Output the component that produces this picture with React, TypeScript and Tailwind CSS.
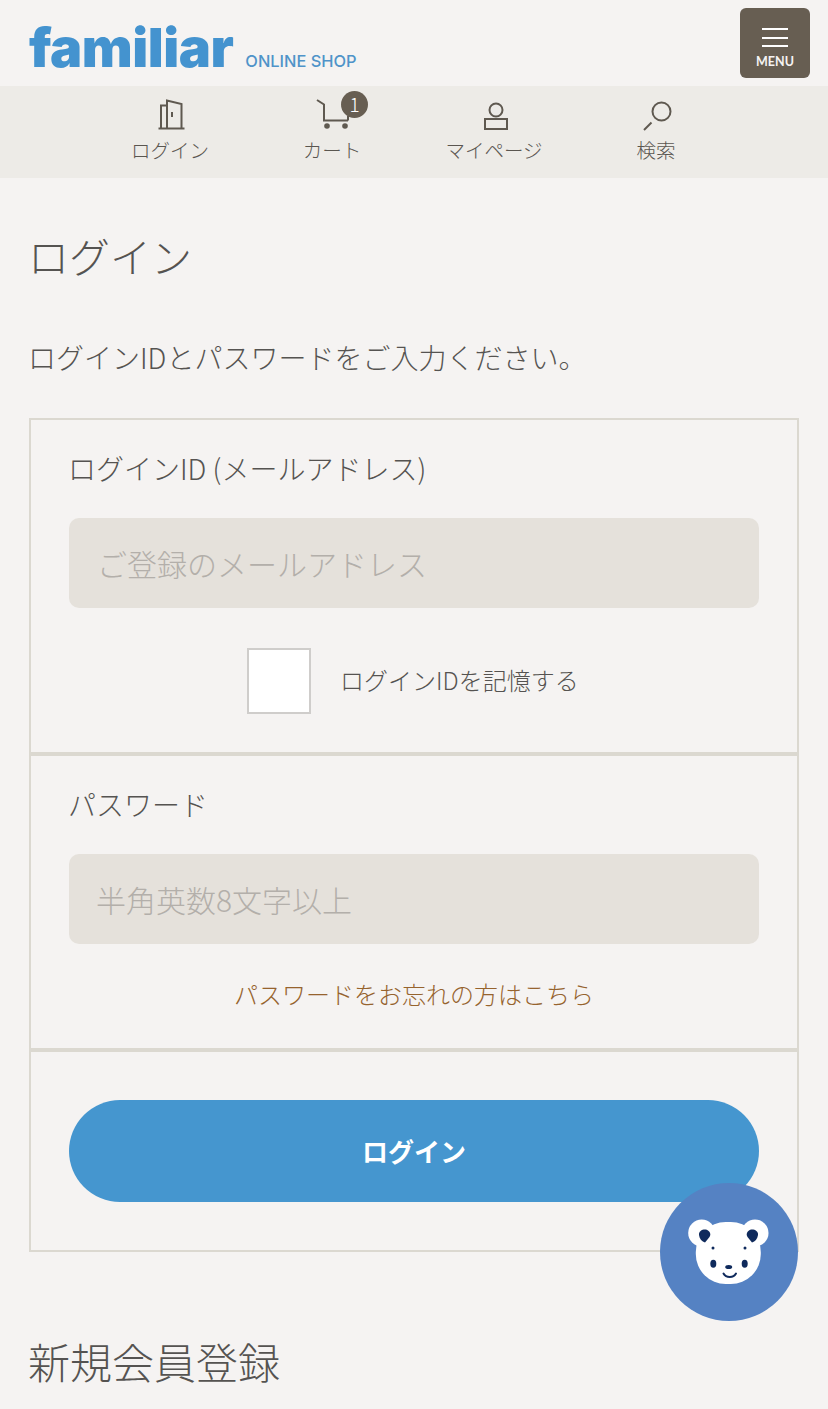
const jp = { fontFamily: '"Noto Sans CJK JP", sans-serif' };

function DoorIcon() {
  return (
    <svg width="28" height="32" viewBox="0 0 28 32" fill="none" stroke="#5f5950" strokeWidth="2">
      <path d="M0.5 29.5H26.5" />
      <path d="M3 29V6.5H9" />
      <path d="M9 29V1.5L23.5 5V29" />
      <path d="M14 13V18" />
    </svg>
  );
}
function CartIcon() {
  return (
    <svg width="36" height="32" viewBox="0 0 36 32" fill="none" stroke="#5f5950" strokeWidth="2">
      <path d="M1 1L8 5.5V21.5H32" />
      <path d="M32 21.5V17" />
      <circle cx="11" cy="27" r="2.8" fill="#5f5950" stroke="none" />
      <circle cx="29" cy="27" r="2.8" fill="#5f5950" stroke="none" />
    </svg>
  );
}
function UserIcon() {
  return (
    <svg width="26" height="30" viewBox="0 0 26 30" fill="none" stroke="#5f5950" strokeWidth="2">
      <circle cx="13" cy="9" r="6.5" />
      <rect x="2" y="18" width="22" height="10" />
    </svg>
  );
}
function SearchIcon() {
  return (
    <svg width="30" height="30" viewBox="0 0 30 30" fill="none" stroke="#5f5950" strokeWidth="2">
      <circle cx="18.5" cy="10.5" r="9" />
      <path d="M1 29L8.5 21.5" />
    </svg>
  );
}
function BearIcon() {
  return (
    <svg width="84" height="68" viewBox="0 0 84 68">
      <g fill="#ffffff">
        <circle cx="14.7" cy="15" r="13.5" />
        <circle cx="68" cy="15" r="13.5" />
        <rect x="8.8" y="4" width="65" height="62" rx="30" />
      </g>
      <g fill="#0f2a5c">
        <path d="M12 17C11.5 13 15.5 11 19 11.5C22.5 12.5 24.5 16 22.5 19L18 24.5C15 23.5 12.5 21 12 17Z" />
        <path d="M71 17C71.5 13 67.5 11 64 11.5C60.5 12.5 58.5 16 60.5 19L65 24.5C68 23.5 70.5 21 71 17Z" />
        <circle cx="26" cy="30" r="1.5" />
        <circle cx="58" cy="30" r="1.5" />
        <ellipse cx="26.3" cy="45.7" rx="3" ry="4" />
        <ellipse cx="57.7" cy="45.7" rx="3" ry="4" />
        <ellipse cx="41.7" cy="49" rx="3.5" ry="2" />
      </g>
      <path d="M36.5 55.5C39 60 46.5 60 49 55.5" fill="none" stroke="#0f2a5c" strokeWidth="2" strokeLinecap="round" />
    </svg>
  );
}

function NavItem({ label, icon, badge }: { label: string; icon: React.ReactNode; badge?: string }) {
  return (
    <a className="relative flex flex-col items-center">
      <div className="relative flex h-[32px] translate-x-[2px] items-end justify-center">
        {icon}
        {badge && (
          <span className="absolute left-[25px] top-[-8px] flex h-[27px] w-[27px] items-center justify-center rounded-full bg-[#675e52] text-[19px] font-light text-white">
            {badge}
          </span>
        )}
      </div>
      <span className="mt-[4px] text-[19.5px] font-light leading-[30px] text-[#5a5650]">{label}</span>
    </a>
  );
}

export default function App() {
  return (
    <div className="relative h-[1409px] w-[828px] overflow-hidden bg-[#f5f3f2]" style={jp}>
      <header className="flex h-[86px] items-start justify-between pl-[29px] pr-[18px]">
        <div className="flex items-baseline pt-[17px]">
          <span className="text-[54px] font-black leading-[62px] tracking-[-0.5px] text-[#4493cf] [font-family:Inter,sans-serif]">familiar</span>
          <span className="ml-[12px] text-[16.4px] font-medium text-[#4f93c9] [font-family:Inter,sans-serif]">ONLINE SHOP</span>
        </div>
        <button className="mt-[8px] flex h-[70px] w-[70px] flex-col items-center rounded-[6px] bg-[#675e52] pt-[20px]">
          <span className="h-[2px] w-[26px] bg-white" />
          <span className="mt-[6.5px] h-[2px] w-[26px] bg-white" />
          <span className="mt-[6.5px] h-[2px] w-[26px] bg-white" />
          <span className="mt-[6px] text-[12.5px] font-bold leading-[18px] text-[#f5f3f2] [font-family:Lato,sans-serif]">MENU</span>
        </button>
      </header>

      <nav className="flex h-[92px] justify-center bg-[#edebe7] pt-[13px]">
        <div className="grid w-[648px] -translate-x-[1px] grid-cols-4">
          <NavItem label="ログイン" icon={<DoorIcon />} />
          <NavItem label="カート" icon={<CartIcon />} badge="1" />
          <NavItem label="マイページ" icon={<UserIcon />} />
          <NavItem label="検索" icon={<SearchIcon />} />
        </div>
      </nav>

      <main className="px-[29px]">
        <h1 className="-ml-[1px] mt-[50px] text-[41px] font-light leading-[54px] text-[#555351]">ログイン</h1>
        <p className="-ml-[1px] mt-[55px] whitespace-nowrap text-[28px] font-light leading-[40px] text-[#555351]">ログインIDとパスワードをご入力ください。</p>

        <div className="mt-[41px] w-[770px]">
          <section className="h-[336px] border-2 border-[#dbd8d0] px-[38px] pt-[28px]">
            <label className="-ml-[1px] block text-[28px] font-light leading-[40px] text-[#555351]">ログインID (メールアドレス)</label>
            <input
              placeholder="ご登録のメールアドレス"
              className="mt-[30px] block h-[90px] w-[690px] rounded-[10px] bg-[#e5e1db] px-[28px] text-[30px] font-light text-[#555351] outline-none placeholder:text-[#b3afaa]"
            />
            <div className="mt-[40px] flex items-center pl-[178px]">
              <span className="block h-[66px] w-[64px] border-2 border-[#cfcdcb] bg-white" />
              <span className="-mt-[2px] ml-[29px] text-[24px] font-light leading-[36px] text-[#555351]">ログインIDを記憶する</span>
            </div>
          </section>

          <section className="h-[296px] border-2 border-[#dbd8d0] px-[38px] pt-[28px]">
            <label className="-ml-[1px] block text-[28px] font-light leading-[40px] text-[#555351]">パスワード</label>
            <input
              placeholder="半角英数8文字以上"
              className="mt-[30px] block h-[90px] w-[690px] rounded-[10px] bg-[#e5e1db] px-[27px] text-[30px] font-light text-[#555351] outline-none placeholder:text-[#b3afaa]"
            />
            <a className="mt-[32px] block text-center text-[24px] font-light leading-[36px] text-[#96632e]">パスワードをお忘れの方はこちら</a>
          </section>

          <section className="h-[202px] border-2 border-[#dbd8d0] px-[38px] pt-[48px]">
            <button className="flex h-[102px] w-[690px] items-center justify-center rounded-full bg-[#4596cf] pb-[2px] text-[26px] font-bold text-white">ログイン</button>
          </section>
        </div>

        <h2 className="-ml-[1px] mt-[79px] text-[42px] font-light leading-[60px] text-[#555351]">新規会員登録</h2>
      </main>

      <div className="absolute left-[660px] top-[1183px] flex h-[138px] w-[138px] items-center justify-center rounded-full bg-[#5582c3]">
        <BearIcon />
      </div>
    </div>
  );
}
